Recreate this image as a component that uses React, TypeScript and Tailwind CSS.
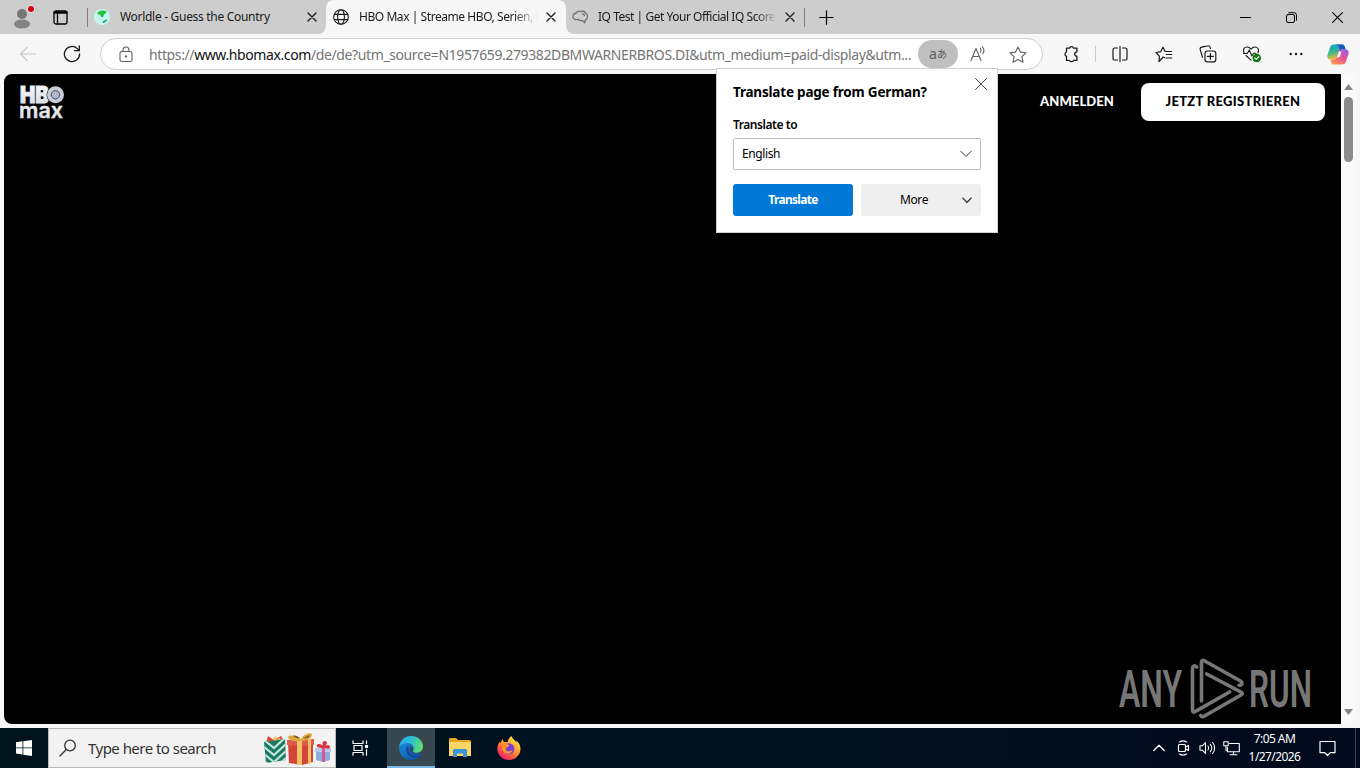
import type { ReactNode } from "react";

type IconProps = {
  w?: number;
  h?: number;
  className?: string;
  sw?: number;
  children: ReactNode;
};

const Icon = ({ w = 20, h = 20, className = "", sw = 1.2, children }: IconProps) => (
  <svg
    width={w}
    height={h}
    viewBox={`0 0 ${w} ${h}`}
    fill="none"
    stroke="currentColor"
    strokeWidth={sw}
    strokeLinecap="round"
    strokeLinejoin="round"
    className={`shrink-0 ${className}`}
  >
    {children}
  </svg>
);

const CloseIcon = () => (
  <Icon w={10} h={10} sw={1.3}>
    <path d="M1 1l8 8M9 1l-8 8" />
  </Icon>
);

const Earth = () => (
  <Icon w={16} h={16}>
    <circle cx="8" cy="8" r="8" fill="#c8f4f2" stroke="none" />
    <path d="M3.5 3.5C6 1 10 .8 12.5 2.5l-.8 2-1.7.8-.8 2.7-2 .2-1-2.4-2.3-.4z" fill="#1fc23b" stroke="none" />
    <path d="M8.5 12.5l5-2.6c-.5 1.8-2 3.6-4.2 4.3z" fill="#12a36b" stroke="none" />
  </Icon>
);

const Globe = () => (
  <Icon w={16} h={16} sw={1.1}>
    <circle cx="8" cy="8" r="7.3" />
    <ellipse cx="8" cy="8" rx="3.4" ry="7.3" />
    <path d="M1.4 5.4h13.2M1.4 10.6h13.2" />
  </Icon>
);

const Brain = () => (
  <Icon w={18} h={14} sw={1.3} className="text-[#707070]">
    <path d="M5 3C6.500 1 8.500.800 10 1.500c2-.5 4 .2 4.500 1.700 1.700.8 2.300 2.800 1.600 4.300.2 1.500-.6 2.500-1.900 2.700l-.4 2.600-2.700-2.300c-1.600.3-3-.1-3.900-1.200-2.200.7-4.700 0-5.200-1.900C1.500 5.400 3 3.300 5 3z" />
    <path d="M11.500 4c1 0 1.700.5 2 1.300" />
  </Icon>
);

const TabBar = () => (
  <div className="flex h-[34px] bg-[#cdcdcd] text-[12px] text-[#1a1a1a]">
    <div className="flex w-[44px] items-center justify-center pb-px">
      <svg width="26" height="26" viewBox="0 0 26 26">
        <circle cx="13" cy="10" r="5" fill="#767676" />
        <ellipse cx="13" cy="20" rx="8" ry="4.500" fill="#858381" />
        <circle cx="22" cy="5" r="4" fill="#e3dede" />
        <circle cx="22" cy="5" r="3" fill="#d0021b" />
      </svg>
    </div>
    <div className="flex w-[43px] items-center pl-[9px]">
      <Icon w={15} h={15} sw={1.3} className="text-black">
        <rect x="1" y="1" width="13" height="13" rx="2" />
        <path d="M1.500 2.500h12" strokeWidth="2.500" />
        <path d="M4.500 4v10" />
      </Icon>
    </div>
    <div className="mt-2 h-[19px] w-px bg-[#7d7d7d]" />
    <div className="flex w-[238px] bg-[#f7f7f7]">
      <div className="flex w-full items-center rounded-br-lg bg-[#cdcdcd] pl-[6px] pr-[9px]">
        <Earth />
        <span className="ml-[10px] flex-1 whitespace-nowrap tracking-[-0.3px]">Worldle - Guess the Country</span>
        <CloseIcon />
      </div>
    </div>
    <div className="flex w-[240px] bg-[#cdcdcd]">
      <div className="flex w-full items-center rounded-t-lg bg-[#f7f7f7] pl-[7px] pr-[10px]">
        <Globe />
        <span className="ml-[10px] mr-[8px] flex-1 overflow-hidden whitespace-nowrap tracking-[-0.44px] [mask-image:linear-gradient(to_right,black_86%,transparent)]">
          HBO Max | Streame HBO, Serien, F
        </span>
        <CloseIcon />
      </div>
    </div>
    <div className="flex w-[238px] bg-[#f7f7f7]">
      <div className="flex w-full items-center rounded-bl-lg bg-[#cdcdcd] pl-[5px] pr-[9px]">
        <Brain />
        <span className="ml-[9px] mr-[8px] flex-1 overflow-hidden whitespace-nowrap tracking-[-0.47px] [mask-image:linear-gradient(to_right,black_88%,transparent)]">
          IQ Test | Get Your Official IQ Score
        </span>
        <CloseIcon />
      </div>
    </div>
    <div className="mt-2 h-[19px] w-px bg-[#7d7d7d]" />
    <div className="flex w-[43px] items-center justify-center text-black">
      <Icon w={15} h={15}>
        <path d="M7.500 .8v13.400M.8 7.500h13.400" />
      </Icon>
    </div>
    <div className="ml-auto flex text-black">
      <div className="flex w-[46px] items-center justify-center">
        <Icon w={11} h={10} sw={1}>
          <path d="M.5 5.500h10" />
        </Icon>
      </div>
      <div className="flex w-[46px] items-center justify-center">
        <Icon w={11} h={11} sw={1}>
          <rect x=".5" y="2.500" width="8" height="8" rx="1.500" />
          <path d="M2.800.7h5.200a2.500 2.500 0 0 1 2.500 2.500v5" />
        </Icon>
      </div>
      <div className="flex w-[46px] items-center justify-center">
        <Icon w={11} h={11} sw={1.1}>
          <path d="M.6.6l9.800 9.800M10.400.6L.6 10.400" />
        </Icon>
      </div>
    </div>
  </div>
);

const Cell = ({ children, className = "w-[44px]" }: { children: ReactNode; className?: string }) => (
  <div className={`flex h-full shrink-0 items-center justify-center ${className}`}>{children}</div>
);

const Toolbar = () => (
  <div className="flex h-[40px] items-center bg-[#f7f7f7] pl-[6px] text-[#1a1a1a]">
    <Cell>
      <Icon w={18} h={16} className="text-[#c8c8c8]">
        <path d="M16.500 8H1.500M8 1.500L1.500 8 8 14.500" />
      </Icon>
    </Cell>
    <Cell className="mr-[6px] w-[44px]">
      <Icon w={18} h={18} sw={1.3}>
        <path d="M16.600 9a7.600 7.600 0 1 1-2.300-5.400l1.900 1.900" />
        <path d="M16.300 1v4.700h-4.700" />
      </Icon>
    </Cell>
    <div className="flex h-[32px] w-[943px] shrink-0 items-center rounded-full border border-[#cfcfcf] bg-white pl-[17px] text-[#606060]">
      <Icon w={16} h={17} sw={1.1}>
        <rect x="2" y="5.500" width="12" height="10" rx="1.800" />
        <path d="M5 5.500V4a3 3 0 0 1 6 0v1.500" />
        <circle cx="8" cy="10.500" r=".6" fill="currentColor" />
      </Icon>
      <span className="ml-[15px] w-[769px] whitespace-nowrap text-[14px] tracking-[-0.39px] text-[#757575]">
        https://<span className="text-[#111]">www.hbomax.com</span>
        /de/de?utm_source=N1957659.279382DBMWARNERBROS.DI&amp;utm_medium=paid-display&amp;utm...
      </span>
      <div className="flex h-[28px] w-[40px] shrink-0 items-center justify-center rounded-full bg-[#bfbfbf] pb-px text-[#5a5a5a]">
        <span className="text-[14px] leading-none">a</span>
        <span className="font-['Noto_Sans_CJK_JP',sans-serif] text-[10px] leading-none">あ</span>
      </div>
      <div className="flex w-[40px] justify-center">
        <Icon w={18} h={16} sw={1.1}>
          <path d="M2 14.500L7 2.500l5 12M3.800 10.500h6.400" />
          <path d="M11.300 2.200c1 1.300 1 3 .2 4.300M13.500 1c1.700 2 1.700 4.800.3 6.800" />
        </Icon>
      </div>
      <div className="flex w-[40px] justify-center">
        <Icon w={18} h={17} sw={1.1}>
          <path d="M9 1l2.400 5.100 5.600.7-4.100 3.900 1.100 5.500L9 13.500l-5 2.700 1.100-5.500L1 6.800l5.600-.7z" />
        </Icon>
      </div>
    </div>
    <Cell className="ml-[6px] w-[44px]">
      <Icon w={17} h={18} sw={1.3}>
        <path d="M3.500 3.200h3a2.200 2.200 0 0 1 4.200 0h3.200v3.600a2.100 2.100 0 0 0 0 4.300v4.300h-3.400a2.200 2.200 0 0 1-4 0h-3v-4.100a2.300 2.300 0 0 1 0-4.300z" />
      </Icon>
    </Cell>
    <div className="mx-[2px] h-[16px] w-px shrink-0 bg-[#cacaca]" />
    <Cell className="w-[43px]">
      <Icon w={16} h={16} sw={1.2}>
        <path d="M5.500 2H2.500A1.500 1.500 0 0 0 1 3.500v9A1.500 1.500 0 0 0 2.500 14h3M10.500 2h3A1.500 1.500 0 0 1 15 3.500v9a1.500 1.500 0 0 1-1.500 1.500h-3M8 .6v14.800" />
      </Icon>
    </Cell>
    <Cell className="w-[45px]">
      <Icon w={18} h={17} sw={1.2}>
        <path d="M9.800 11.700L8.300 11 4 15.500l.4-5.300L1 6.500l4.800-.9L8 1.200l2.100 4.300h6.400M11.200 8.500h5.600M11.200 12h5.600" />
      </Icon>
    </Cell>
    <Cell>
      <Icon w={18} h={18} sw={1.2}>
        <rect x="6" y="6" width="10.800" height="10.800" rx="2.300" />
        <path d="M11.400 8.500v5.800M8.500 11.400h5.800M3.500 12.300L1.200 4.600a2 2 0 0 1 1.400-2.400l6-1.300a2 2 0 0 1 2.500 1.300l.4 1.400" />
      </Icon>
    </Cell>
    <Cell>
      <Icon w={20} h={18} sw={1.1}>
        <path d="M2.300 8.300C.4 4.600 2.200 2 5 2c1.800 0 3 1 4 2.200C10 3 11.200 2 13 2c2.800 0 4.500 2.600 3 5.700M4 10.500L9 15.200" />
        <path d="M1.500 8.500h3.800l2-3.500 2.600 6 1.800-2.800h2.300" />
        <circle cx="14.800" cy="13" r="4.300" fill="#107c10" stroke="none" />
        <path d="M12.900 13l1.400 1.400 2.500-2.700" stroke="white" />
      </Icon>
    </Cell>
    <Cell>
      <Icon w={14} h={4}>
        <g fill="currentColor" stroke="none">
          <circle cx="1.700" cy="2" r="1.200" />
          <circle cx="7" cy="2" r="1.200" />
          <circle cx="12.300" cy="2" r="1.200" />
        </g>
      </Icon>
    </Cell>
    <Cell className="w-[40px]">
      <svg width="22" height="21" viewBox="0 0 22 21">
        <defs>
          <linearGradient id="cpA" x1="0" y1="0" x2=".3" y2="1">
            <stop offset="0" stopColor="#139fd8" />
            <stop offset=".55" stopColor="#35b78e" />
            <stop offset="1" stopColor="#f2c22c" />
          </linearGradient>
          <linearGradient id="cpB" x1=".8" y1="0" x2=".2" y2="1">
            <stop offset="0" stopColor="#9b5de0" />
            <stop offset=".5" stopColor="#e8568f" />
            <stop offset="1" stopColor="#ff9c4a" />
          </linearGradient>
        </defs>
        <path d="M11 .5h4.500c1.300 0 1.900 1 2.300 2.300l.8 2.700h-3.500c-1.500 0-2 .8-2.400 2L11 13c-.5 1.600-1 2.500-3 2.500H3.500C.8 15.500-.2 13.500.5 11L3 3.500C3.700 1.300 5 .5 7 .5z" fill="url(#cpA)" />
        <path d="M11 .5h4.500c1.300 0 1.900 1 2.300 2.300l.8 2.700h-3.500L13 6C12 3 12 1 8 .5z" fill="#1c54c4" />
        <path d="M11 20.500H6.500c-1.300 0-1.900-1-2.300-2.300l-.8-2.700H7c1.500 0 2-.8 2.400-2L11 8c.5-1.600 1-2.500 3-2.500h4.500c2.700 0 3.700 2 3 4.500L19 17.500c-.7 2.200-2 3-4 3z" fill="url(#cpB)" />
        <path d="M11.800 7.500L9.600 14l3.300-1.200 1.600-5.300z" fill="#f7f7f7" />
      </svg>
    </Cell>
  </div>
);

const HboLogo = () => (
  <svg width="46" height="36" viewBox="0 0 46 36" className="overflow-visible">
    <defs>
      <linearGradient id="hbo" x1="0" y1="0" x2="0" y2="1">
        <stop offset="0" stopColor="#ffffff" />
        <stop offset="1" stopColor="#d2d4dd" />
      </linearGradient>
    </defs>
    <g fontFamily="Inter, sans-serif" fill="url(#hbo)" stroke="#e8e9ee">
      <text x="0" y="19" fontSize="23" fontWeight="900" strokeWidth="1" textLength="29" lengthAdjust="spacingAndGlyphs">HB</text>
      <circle cx="35.500" cy="10.800" r="9" fill="#000" stroke="none" />
      <circle cx="35.500" cy="10.800" r="8.500" fill="#c9cddb" stroke="none" />
      <circle cx="35.500" cy="10.800" r="4.200" fill="#b3b8c9" stroke="#4a4d58" strokeWidth="1" />
      <text x="-1" y="33.500" fontSize="20.500" fontWeight="600" strokeWidth=".4" textLength="44" lengthAdjust="spacingAndGlyphs">max</text>
    </g>
  </svg>
);

const AnyRun = () => (
  <svg width="194" height="64" viewBox="0 0 194 64" className="overflow-visible text-[#777]">
    <g fill="currentColor" fontFamily="Roboto, sans-serif" fontSize="52" fontWeight="600">
      <text x="1" y="51" textLength="63" lengthAdjust="spacingAndGlyphs">ANY</text>
      <text x="131" y="51" textLength="63" lengthAdjust="spacingAndGlyphs">RUN</text>
    </g>
    <g fill="none" stroke="currentColor" strokeWidth="3.600" strokeLinejoin="round" strokeLinecap="round">
      <path d="M83.500 45V6.500c0-2.200 1-2.700 2.800-1.700L122.500 25c2.500 1.500 1.700 4.300-1.500 4.300" />
      <path d="M78.700 11c-2.500-2.200-4.200-.8-4.200 1.800v41.500c0 1.600 1.200 2.200 2.600 1.300L111.500 36" />
      <path d="M88.700 18l34.800 18.300c1.200.6 1.200 1.800 0 2.500L86.500 60c-1.800 1-3 .8-3.800-.5" />
    </g>
  </svg>
);

const TranslatePopup = () => (
  <div className="absolute left-[716px] top-[68px] h-[165px] w-[282px] border border-[#d0d0d0] bg-white px-4 text-[12px] text-black">
    <div className="flex h-[40px] justify-between">
      <h2 className="mt-[13px] whitespace-nowrap text-[13.500px] font-bold leading-[20px] tracking-[-0.2px]">Translate page from German?</h2>
      <Icon w={12} h={12} sw={1} className="mt-[9px] -mr-[6px] text-[#444]">
        <path d="M.5.500l11 11M11.500.500l-11 11" />
      </Icon>
    </div>
    <div className="mt-[8px] font-semibold leading-[16px] tracking-[-0.45px]">Translate to</div>
    <div className="mt-[5px] flex h-[32px] items-center justify-between rounded-[2px] border border-[#bdbdbd] px-2">
      <span className="tracking-[-0.4px]">English</span>
      <Icon w={12} h={8} sw={1} className="text-[#333]">
        <path d="M.8 1.200L6 6.500l5.200-5.300" />
      </Icon>
    </div>
    <div className="mt-[14px] flex gap-2">
      <div className="flex h-[32px] w-[120px] items-center justify-center rounded-[3px] bg-[#0078d7] font-bold tracking-[-0.7px] text-white">
        Translate
      </div>
      <div className="flex h-[32px] w-[120px] items-center justify-between rounded-[3px] bg-[#efefef] pl-[39px] pr-[9px]">
        <span className="tracking-[-0.4px]">More</span>
        <Icon w={10} h={7} sw={1.100} className="text-[#333]">
          <path d="M.8 1L5 5.500 9.200 1" />
        </Icon>
      </div>
    </div>
  </div>
);

const Page = () => (
  <div className="flex h-[654px] bg-[#f7f7f7] px-[4px] pb-[4px]">
    <div className="flex w-[1352px] overflow-hidden rounded-lg bg-[#fafafa]">
      <div className="flex w-[1337px] flex-col justify-between bg-black">
        <div className="flex h-[56px] items-center pl-[16px] pr-[16px] font-['Lato','Liberation_Sans',sans-serif] text-[13px] font-black">
          <HboLogo />
          <span className="ml-auto mr-[27px] w-[74px] whitespace-nowrap tracking-[0.1px] text-white">ANMELDEN</span>
          <div className="flex h-[38px] w-[184px] items-center justify-center whitespace-nowrap rounded-lg bg-white tracking-[0.32px] text-black">
            JETZT REGISTRIEREN
          </div>
        </div>
        <div className="flex justify-end pb-[4px] pr-[29px]">
          <AnyRun />
        </div>
      </div>
      <div className="flex w-[15px] flex-col items-center text-[#858585]">
        <Icon w={9} h={6} className="mt-[10px]">
          <path d="M4.500 0L9 6H0z" fill="currentColor" stroke="none" />
        </Icon>
        <div className="mt-[7px] h-[65px] w-[9px] rounded-full bg-[#8b8b8b]" />
        <Icon w={9} h={6} className="mb-[9px] mt-auto">
          <path d="M4.500 6L9 0H0z" fill="currentColor" stroke="none" />
        </Icon>
      </div>
    </div>
  </div>
);

const Gifts = () => (
  <svg width="70" height="38" viewBox="0 0 70 38">
    <defs>
      <clipPath id="greenBox">
        <path d="M1 13l21-3 1 21-20 3z" />
      </clipPath>
    </defs>
    <path d="M3 14L5 7l6 4 7-4 4 7z" fill="#d9483b" />
    <path d="M11 13c-2-6 3-8 3-2 2-4 5-2 3 2z" fill="#e9c05c" />
    <g clipPath="url(#greenBox)">
      <path d="M0 8h24v30H0z" fill="#187a65" />
      <path d="M0 10l11 9 13-12M0 17l11 9 13-12M0 24l11 9 13-12M0 31l11 9 13-12" stroke="#c4e5d8" strokeWidth="2.200" fill="none" />
    </g>
    <path d="M25 13h25v20l-11 3-13-2z" fill="#d5443a" />
    <path d="M24 11l27-1v6l-13 1-14-1z" fill="#e05a4b" />
    <path d="M34 10h5v26h-5zM45 10h3v24l-3 1z" fill="#efc362" />
    <path d="M38 12c-6 1-12 0-13-4 2-3 10-1 13 2 3-5 8-7 11-5 0 4-4 7-11 7z" fill="#dba943" />
    <path d="M37 9.500c-3 0-6-1-7-3 3-.5 6 1 7 3zM41 9.500c1-2 4-3.500 6-3-1 2-3 3-6 3z" fill="#84571f" />
    <path d="M53 22h14v9l-7 2-7-2z" fill="#8daedd" />
    <path d="M52 19h16v4H52z" fill="#b9c9ed" />
    <path d="M59 19h3v14h-3z" fill="#da5399" />
    <path d="M60 19c-5 0-7-1-6-3s5-1 6 1c-1-4 0-5 2-5s3 3 0 5c3-2 5-1 5 1s-2 2-7 1z" fill="#d4373f" />
  </svg>
);

const EdgeLogo = () => (
  <svg width="24" height="24" viewBox="0 0 24 24">
    <defs>
      <linearGradient id="edgeTop" x1="0" y1=".3" x2="1" y2=".5">
        <stop offset="0" stopColor="#2aa5e8" />
        <stop offset=".5" stopColor="#2bc3d2" />
        <stop offset="1" stopColor="#62dd67" />
      </linearGradient>
      <linearGradient id="edgeLow" x1="0" y1="0" x2="1" y2="1">
        <stop offset="0" stopColor="#1a8ce0" />
        <stop offset="1" stopColor="#0c4f9f" />
      </linearGradient>
    </defs>
    <path d="M0 11c0 8 5 13 12 13 4.500 0 8-2 10.300-5.500.5-.8 0-1.300-.8-.9L16 16V6L5 5z" fill="url(#edgeLow)" />
    <path d="M0 11C.8 4.500 5.500 0 12 0c7 0 12 5 12 10.500 0 4-3 6.200-6 6.200-2.500 0-4.300-.8-4.300-1.800 0-.7 1-1.200 1-3 0-2.800-2.700-5-6.200-5C4.500 6.900 1.500 8.500 0 11z" fill="url(#edgeTop)" />
    <path d="M9.500 9.300C7 11 6.500 14 8 17c1.800 3.700 6 5.200 9.500 4.800 2.200-.3 3.600-1.300 4.700-3.100-6 2.700-12.500-.7-12.700-5.700z" fill="#0d4aa0" />
    <path d="M10.800 12c-.5 2.700 2 5.400 6 6 2.100.3 4 0 5-.6-4.200.8-8.100-.9-8.100-2.700 0-.7.800-1.200.7-2.400-.5-2-3-2.200-3.600-.3z" fill="#37474f" />
  </svg>
);

const FolderIcon = () => (
  <svg width="22" height="20" viewBox="0 0 22 20">
    <path d="M0 1.500C0 .7.500 0 1.300 0H7l2 2h11.500c.8 0 1.500.6 1.500 1.400V18H0z" fill="#e8a51d" />
    <path d="M0 4h22v14H0z" fill="#fbd667" />
    <path d="M4 19v-6.500c0-.8.700-1.500 1.500-1.500h11c.8 0 1.500.7 1.500 1.500V19h-4v-3.500H8V19z" fill="#3a96d8" />
  </svg>
);

const FirefoxLogo = () => (
  <svg width="24" height="24" viewBox="0 0 24 24">
    <defs>
      <linearGradient id="fox" x1=".8" y1=".1" x2=".2" y2="1">
        <stop offset="0" stopColor="#ffe14a" />
        <stop offset=".4" stopColor="#ff9a2a" />
        <stop offset=".75" stopColor="#ff4550" />
        <stop offset="1" stopColor="#e5197b" />
      </linearGradient>
    </defs>
    <path d="M14.500 0c.5 2 2 3 3.500 4.500.8.800 1.300 1.700 1.600 2.300 0-1 0-1.600-.3-2.300C22 6.500 23.500 9.500 23.500 12.700 23.500 19 18.300 24 12 24S.3 19 .3 12.700C.3 9.700 1.500 7.200 3 5.500c0 .7.200 1.200.4 1.600C4 5.500 4.800 4 6 3c0 1.500.4 2.500 1.300 3 1.200-.2 2.500 0 3.200.3C11 3.500 12.300 1.500 14.500 0z" fill="url(#fox)" />
    <circle cx="12" cy="12.800" r="5.500" fill="#7a3fd6" />
    <path d="M6 8.500c2-1 3.500-.8 5-.2 1 .4 1.500 1.500.7 2.200-1 .8-2.700.8-3 2-.2 2 1.800 3.300 4 2.800 1.300-.3 2-1 3-.7-1 2.500-3.500 3.600-6 3C6.500 16.800 5 14 5 11.800z" fill="#ff9328" />
  </svg>
);

const Taskbar = () => (
  <div className="flex h-[40px] bg-linear-to-r from-[#00141d] via-[#00111f] to-[#000a1c] text-white">
    <div className="flex w-[48px] items-center justify-center">
      <svg width="16" height="16" viewBox="0 0 16 16" fill="white">
        <path d="M0 2.200L6.500 1.300v6.200H0zM7.300 1.200L16 0v7.500H7.300zM0 8.300h6.500v6.200L0 13.600zM7.300 8.300H16V16l-8.700-1.300z" />
      </svg>
    </div>
    <div className="flex w-[288px] items-center border border-[#b9b9b9] bg-[#f2f2f2] text-[#333]">
      <Icon w={18} h={18} sw={1.300} className="ml-[10px]">
        <circle cx="11" cy="6.500" r="5.300" />
        <path d="M7.200 10.500L1 17" />
      </Icon>
      <span className="ml-[11px] whitespace-nowrap text-[15px] tracking-[-0.53px]">Type here to search</span>
      <div className="ml-auto mr-[2px]">
        <Gifts />
      </div>
    </div>
    <div className="flex w-[48px] items-center justify-center">
      <Icon w={17} h={16} sw={1.200}>
        <path d="M1 .8v2.700h10V.8M1 15.200v-2.700h10v2.700M2 5.500h8v5H2zM14.500.8v3M14.500 9.500v5.700" />
        <path d="M13.500 5.500h2v2h-2z" fill="currentColor" />
      </Icon>
    </div>
    <div className="ml-[3px] flex w-[48px] items-center justify-center border-b-2 border-[#76b9ed] bg-[#37474f] pt-[2px]">
      <EdgeLogo />
    </div>
    <div className="flex w-[49px] items-center justify-center">
      <FolderIcon />
    </div>
    <div className="flex w-[49px] items-center justify-center">
      <FirefoxLogo />
    </div>
    <div className="ml-auto flex items-center">
      <div className="flex w-[24px] justify-center">
        <Icon w={12} h={8} sw={1.300}>
          <path d="M.8 6.500L6 1.300l5.200 5.200" />
        </Icon>
      </div>
      <div className="flex w-[24px] justify-center">
        <Icon w={13} h={16} sw={1.200}>
          <rect x="1.500" y="4.500" width="7" height="7" rx="1" />
          <path d="M8.500 7l3-1.500v5L8.500 9M2.500 2C4.500.700 7.500.700 9.500 2M2.500 14c2 1.300 5 1.300 7 0" />
        </Icon>
      </div>
      <div className="flex w-[24px] justify-center">
        <Icon w={17} h={14} sw={1.100}>
          <path d="M1 4.800h2.300L6.500 1.600v10.800L3.300 9.200H1z" />
          <path d="M9 5c.9 1.200.9 2.800 0 4M11.300 3.300c1.800 2.200 1.800 5.200 0 7.400M13.600 1.500c2.700 3.200 2.700 7.800 0 11" />
        </Icon>
      </div>
      <div className="flex w-[24px] justify-center">
        <Icon w={17} h={15} sw={1.100}>
          <path d="M6.500 2.500h9.800v8.300H4.500V6.500M7 13.800h7M10.500 10.800v3M.8.800h4.400v4H.8zM3 4.800v5" />
        </Icon>
      </div>
      <div className="flex w-[63px] flex-col items-center text-center text-[12px] leading-[18px] tracking-[-0.58px]">
        <span>7:05 AM</span>
        <span>1/27/2026</span>
      </div>
      <div className="flex w-[43px] justify-center">
        <Icon w={17} h={17} sw={1.200}>
          <path d="M1 1.500h15v11.200h-4.700L8.500 15.500l-2.800-2.800H1z" />
        </Icon>
      </div>
      <div className="ml-[6px] mr-[4px] h-[40px] w-px bg-[#3a4350]" />
    </div>
  </div>
);

export default function App() {
  return (
    <div className="relative h-[768px] w-[1360px] overflow-hidden bg-[#f7f7f7] font-['Noto_Sans','Open_Sans',sans-serif]">
      <TabBar />
      <Toolbar />
      <Page />
      <Taskbar />
      <TranslatePopup />
    </div>
  );
}
